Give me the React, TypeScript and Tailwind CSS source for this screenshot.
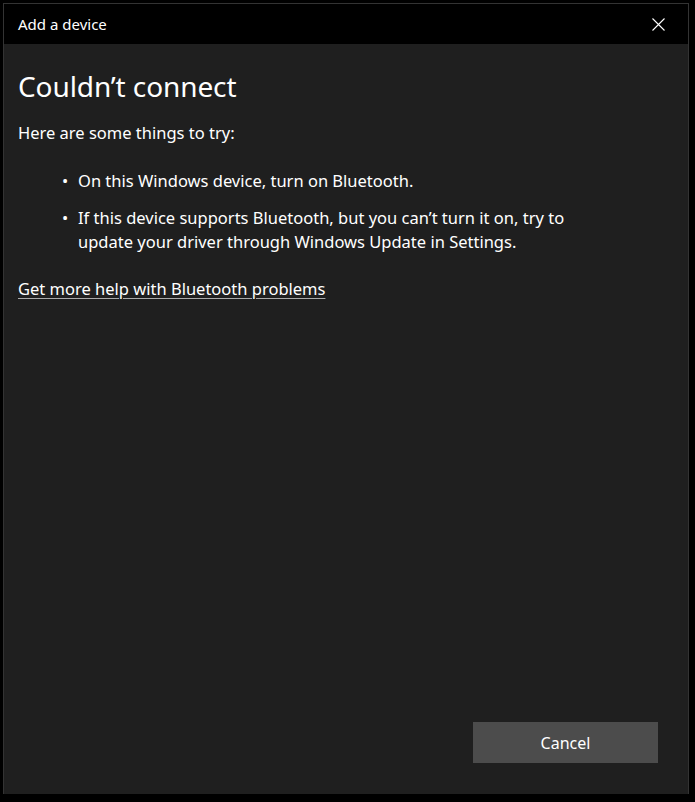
import React from "react";

export default function App() {
  return (
    <div className="w-[695px] h-[802px] bg-black pt-[3px] pl-[3px]" style={{ fontFamily: '"Noto Sans", "Open Sans", sans-serif' }}>
      <div className="w-[686px] h-[791px] border-t border-l border-r border-[#333333] flex flex-col">
        <div className="h-[40px] bg-black flex items-center justify-between pl-[14px] pr-[23px] shrink-0">
          <span className="text-[15px] text-white">Add a device</span>
          <svg width="13" height="13" viewBox="0 0 13 13" className="block">
            <path d="M0.5 0.5 L12.5 12.5 M12.5 0.5 L0.5 12.5" stroke="#ffffff" strokeWidth="1.1" fill="none" />
          </svg>
        </div>
        <div className="flex-1 bg-[#1f1f1f] flex flex-col pl-[14px] pr-[30px]">
          <h1 className="text-[28px] leading-[36px] text-white mt-[24px] tracking-[-0.1px]">Couldn’t connect</h1>
          <p className="text-[16.5px] leading-[24px] text-white mt-[17px]">Here are some things to try:</p>
          <ul className="mt-[24px] pl-[44px] flex flex-col gap-[13px]">
            <li className="flex text-[16.5px] leading-[24px] text-white">
              <span className="w-[16px] shrink-0">•</span>
              <span>On this Windows device, turn on Bluetooth.</span>
            </li>
            <li className="flex text-[16.5px] leading-[24px] text-white">
              <span className="w-[16px] shrink-0">•</span>
              <span className="w-[492px]">If this device supports Bluetooth, but you can’t turn it on, try to update your driver through Windows Update in Settings.</span>
            </li>
          </ul>
          <a className="mt-[23px] text-[16.5px] leading-[24px] text-white underline underline-offset-[3px] decoration-[#aaaaaa] self-start">Get more help with Bluetooth problems</a>
          <div className="flex-1" />
          <div className="flex justify-end mb-[31px]">
            <button className="w-[185px] h-[41px] bg-[#4c4c4c] text-white text-[16px]">Cancel</button>
          </div>
        </div>
      </div>
    </div>
  );
}
